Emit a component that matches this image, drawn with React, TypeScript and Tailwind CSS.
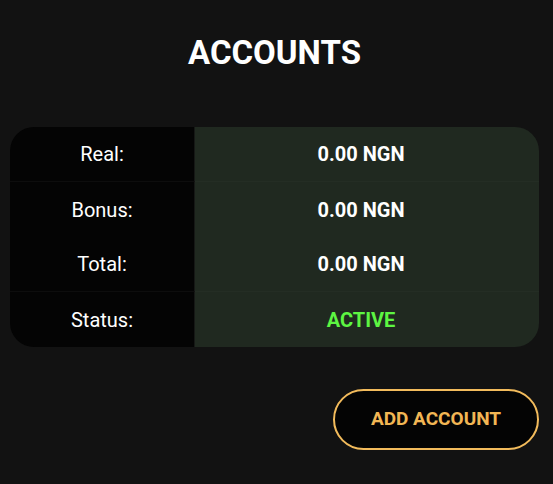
import React from "react";

const rows = [
  { label: "Real:", value: "0.00 NGN", border: true },
  { label: "Bonus:", value: "0.00 NGN", border: false },
  { label: "Total:", value: "0.00 NGN", border: true },
  { label: "Status:", value: "ACTIVE", border: false, active: true },
];

export default function App() {
  return (
    <div
      className="w-[553px] h-[484px] bg-[#121212] text-white pl-[10px] pr-[14px] pt-[33px] flex flex-col"
      style={{ fontFamily: "Roboto, 'Liberation Sans', sans-serif" }}
    >
      <h1 className="text-center text-[33px] leading-[40px] font-bold">ACCOUNTS</h1>
      <div className="mt-[54px] rounded-[24px] overflow-hidden flex flex-col">
        {rows.map((r) => (
          <div key={r.label} className="flex h-[55px]">
            <div
              className={`w-[185px] bg-[#040404] flex items-center justify-center text-[20px] border-r border-[#161816] ${
                r.border ? "border-b border-b-[#0d0d0d]" : ""
              }`}
            >
              {r.label}
            </div>
            <div
              className={`flex-1 bg-[#202920] flex items-center justify-center pr-[12px] text-[20px] font-bold ${
                r.active ? "text-[#5df542]" : "text-white"
              } ${r.border ? "border-b border-b-[#242d24]" : ""}`}
            >
              {r.value}
            </div>
          </div>
        ))}
      </div>
      <div className="flex justify-end mt-[42px]">
        <button className="w-[206px] h-[61px] rounded-full border-2 border-[#f2bb5c] bg-[#040404] text-[#f2b654] text-[19px] font-bold">
          ADD ACCOUNT
        </button>
      </div>
    </div>
  );
}
